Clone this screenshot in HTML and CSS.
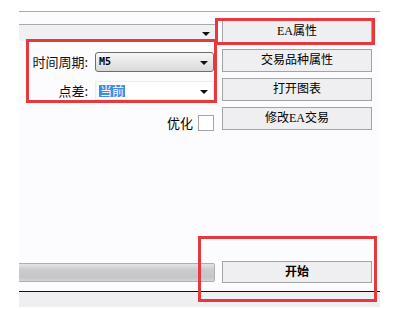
FILE: index.html
```html
<!DOCTYPE html>
<html>
<head>
<title>Tester</title>
<link rel="stylesheet" href="styles.css">
</head>
<body>

<div class="panel">
  <div class="rows">
    <div class="row">
      <div class="left">
        <div class="combo combo-flat"><span></span><i class="arrow"></i></div>
      </div>
      <div class="btn">EA属性</div>
    </div>

    <div class="row">
      <div class="left">
        <label class="lbl">时间周期:</label>
        <div class="combo combo-raised"><span class="mono">M5</span><i class="arrow"></i></div>
      </div>
      <div class="btn">交易品种属性</div>
    </div>

    <div class="row">
      <div class="left">
        <label class="lbl">点差:</label>
        <div class="combo combo-white"><span class="sel">当前</span><i class="arrow"></i></div>
      </div>
      <div class="btn">打开图表</div>
    </div>

    <div class="row">
      <div class="left left-check">
        <label class="lbl-check">优化</label>
        <span class="checkbox"></span>
      </div>
      <div class="btn">修改EA交易</div>
    </div>
  </div>

  <div class="row row-bottom">
    <div class="progress"></div>
    <div class="btn btn-start">开始</div>
  </div>

  <div class="status"></div>
</div>

<!-- annotation boxes drawn over the dialog -->
<div class="mark mark-params"></div>
<div class="mark mark-ea"></div>
<div class="mark mark-start"></div>

</body>
</html>
```

FILE: styles.css
```css
body {
  margin: 0;
  background: #fff;
  font: normal 12px "Noto Sans CJK SC", "Liberation Sans", sans-serif;
  color: #000;
}

.panel {
  margin: 11px 0 0 19px;
  width: 361px;
  height: 295px;
  border-top: 1px solid #aaa9ab;
  background: #fcfbfd;
  display: flex;
  flex-direction: column;
}

.rows {
  padding-top: 8px;
  display: flex;
  flex-direction: column;
  gap: 6px;
}

.row {
  display: grid;
  grid-template-columns: 196px 150px;
  column-gap: 7px;
  align-items: start;
}

.left {
  display: flex;
  align-items: center;
  height: 23px;
}

.lbl {
  width: 69px;
  text-align: right;
  font-size: 13px;
  line-height: 20px;
  margin-right: 7px;
  margin-top: 2px;
  color: #111;
}

.combo {
  position: relative;
  box-sizing: border-box;
  display: flex;
  align-items: center;
  padding-left: 3px;
}

.combo-flat {
  width: 196px;
  height: 17px;
  margin-top: 2px;
  background: #f0eff1;
  border-top: 1px solid #a9a8aa;
}

.combo-raised {
  width: 119px;
  height: 20px;
  margin-top: 2px;
  border: 1px solid #6e6e70;
  border-radius: 3px;
  background: linear-gradient(#f7f7f7, #e9e9e9 45%, #d9d9d9);
}

.combo-white {
  width: 119px;
  height: 19px;
  margin-top: 2px;
  background: #fff;
  border: 1px solid #ecebee;
}

.arrow {
  position: absolute;
  right: 5px;
  top: 50%;
  margin-top: -1px;
  width: 0;
  height: 0;
  border-left: 4px solid transparent;
  border-right: 4px solid transparent;
  border-top: 4px solid #111;
}

.combo-flat .arrow {
  right: 5px;
}

.mono {
  font: bold 10px "DejaVu Sans Mono", monospace;
}

.sel {
  background: #3a8ee6;
  color: #fff;
  font-size: 12px;
  line-height: 12px;
  padding: 0 1px;
}

.left-check {
  justify-content: flex-end;
  align-items: flex-start;
  height: auto;
  padding-top: 8px;
}

.lbl-check {
  font-size: 13px;
  line-height: 16px;
  margin-right: 5px;
}

.checkbox {
  box-sizing: border-box;
  width: 16px;
  height: 16px;
  margin-right: 1px;
  background: #fff;
  border: 1px solid #a5a5a7;
}

.btn {
  box-sizing: border-box;
  height: 23px;
  background: #efeef0;
  border: 1px solid #a3a3a5;
  text-align: center;
  line-height: 21px;
  font-family: "Liberation Serif", "Noto Sans CJK SC", serif;
  font-size: 12px;
}

.row-bottom {
  margin-top: auto;
  margin-bottom: 8px;
  align-items: center;
}

.progress {
  box-sizing: border-box;
  height: 19px;
  border: 1px solid #aeaeb0;
  border-left: none;
  border-radius: 0 2px 2px 0;
  background: linear-gradient(#e4e4e6, #cbcbcd 35%, #c6c6c8 80%, #d6d6d8);
}

.btn-start {
  height: 22px;
  line-height: 20px;
  font-weight: bold;
  font-size: 12px;
}

.status {
  height: 15px;
  border-top: 1px solid #111;
  background: #efeef0;
}

.mark {
  position: absolute;
  box-sizing: border-box;
  border: 3px solid #e5393e;
}

.mark-params {
  left: 26px;
  top: 39px;
  width: 191px;
  height: 64px;
}

.mark-ea {
  left: 215px;
  top: 18px;
  width: 160px;
  height: 27px;
}

.mark-start {
  left: 198px;
  top: 236px;
  width: 179px;
  height: 66px;
}
```
